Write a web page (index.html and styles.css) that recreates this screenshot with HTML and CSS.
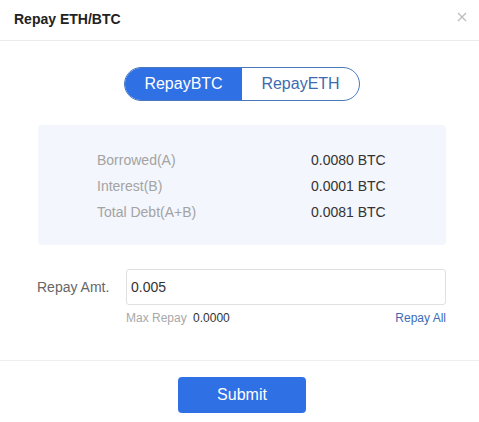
FILE: index.html
```html
<!DOCTYPE html>
<html>
<head>
<meta charset="utf-8">
<link rel="stylesheet" href="styles.css">
</head>
<body>
<div class="modal">
  <div class="header">
    <span class="title">Repay ETH/BTC</span>
    <span class="close">
      <svg width="10" height="10" viewBox="0 0 10 10"><path d="M1 1L9 9M9 1L1 9" stroke="#bdbdbd" stroke-width="1.3" fill="none"/></svg>
    </span>
  </div>
  <div class="content">
    <div class="toggle">
      <div class="seg active">RepayBTC</div>
      <div class="seg">RepayETH</div>
    </div>
    <div class="info">
      <div class="row"><span class="lbl">Borrowed(A)</span><span class="val">0.0080 BTC</span></div>
      <div class="row"><span class="lbl">Interest(B)</span><span class="val">0.0001 BTC</span></div>
      <div class="row"><span class="lbl">Total Debt(A+B)</span><span class="val">0.0081 BTC</span></div>
    </div>
    <div class="field">
      <label class="flabel">Repay Amt.</label>
      <div class="fbox">
        <div class="input">0.005</div>
        <div class="sub">
          <span class="max">Max Repay <b>0.0000</b></span>
          <span class="all">Repay All</span>
        </div>
      </div>
    </div>
  </div>
  <div class="footer">
    <button class="submit">Submit</button>
  </div>
</div>
</body>
</html>
```
FILE: styles.css
```css
html, body {
  margin: 0;
  padding: 0;
  background: #fff;
  font-family: "Liberation Sans", Arial, sans-serif;
}
.modal {
  width: 479px;
  height: 422px;
  background: #fff;
}
.header {
  height: 40px;
  border-bottom: 1px solid #ececec;
  display: flex;
  align-items: center;
  justify-content: space-between;
  padding: 0 12px 0 14px;
  box-sizing: content-box;
}
.title {
  font-size: 14px;
  font-weight: bold;
  color: #222;
  margin-top: -3px;
}
.close {
  display: flex;
  margin-top: -6px;
}
.content {
  margin-left: 38px;
  width: 408px;
  padding-top: 26px;
  height: 319px;
  box-sizing: border-box;
}
.toggle {
  width: 236px;
  height: 34px;
  margin: 0 auto;
  display: flex;
  border: 1px solid #4a78bd;
  border-radius: 17px;
  overflow: hidden;
  box-sizing: border-box;
}
.seg {
  flex: 1;
  display: flex;
  align-items: center;
  justify-content: center;
  font-size: 16px;
  color: #3d6bb0;
}
.seg.active {
  background: #2f70e4;
  color: #fff;
}
.info {
  margin-top: 24px;
  height: 120px;
  background: #f3f6fc;
  border-radius: 4px;
  padding: 22px 0 0 59px;
  box-sizing: border-box;
}
.row {
  display: flex;
  height: 26px;
  align-items: center;
  font-size: 14px;
}
.lbl {
  width: 214px;
  color: #a3a3a3;
}
.val {
  color: #333;
}
.field {
  margin-top: 24px;
  margin-left: -1px;
  display: flex;
}
.flabel {
  width: 89px;
  height: 36px;
  line-height: 36px;
  font-size: 14px;
  color: #666;
}
.fbox {
  flex: 1;
}
.input {
  height: 36px;
  border: 1px solid #e0e0e0;
  border-radius: 3px;
  box-sizing: border-box;
  padding: 0 4px;
  font-size: 14px;
  line-height: 34px;
  color: #333;
}
.sub {
  display: flex;
  justify-content: space-between;
  margin-top: 6px;
  font-size: 12px;
}
.max {
  color: #a8a8a8;
}
.max b {
  font-weight: normal;
  color: #333;
  margin-left: 3px;
}
.all {
  color: #3c6db4;
}
.footer {
  border-top: 1px solid #efefef;
  display: flex;
  justify-content: center;
  padding-top: 16px;
  padding-left: 5px;
}
.submit {
  width: 128px;
  height: 36px;
  border: none;
  border-radius: 4px;
  background: #2f70e4;
  color: #fff;
  font-family: "Liberation Sans", Arial, sans-serif;
  font-size: 16px;
  padding: 0;
}
```
